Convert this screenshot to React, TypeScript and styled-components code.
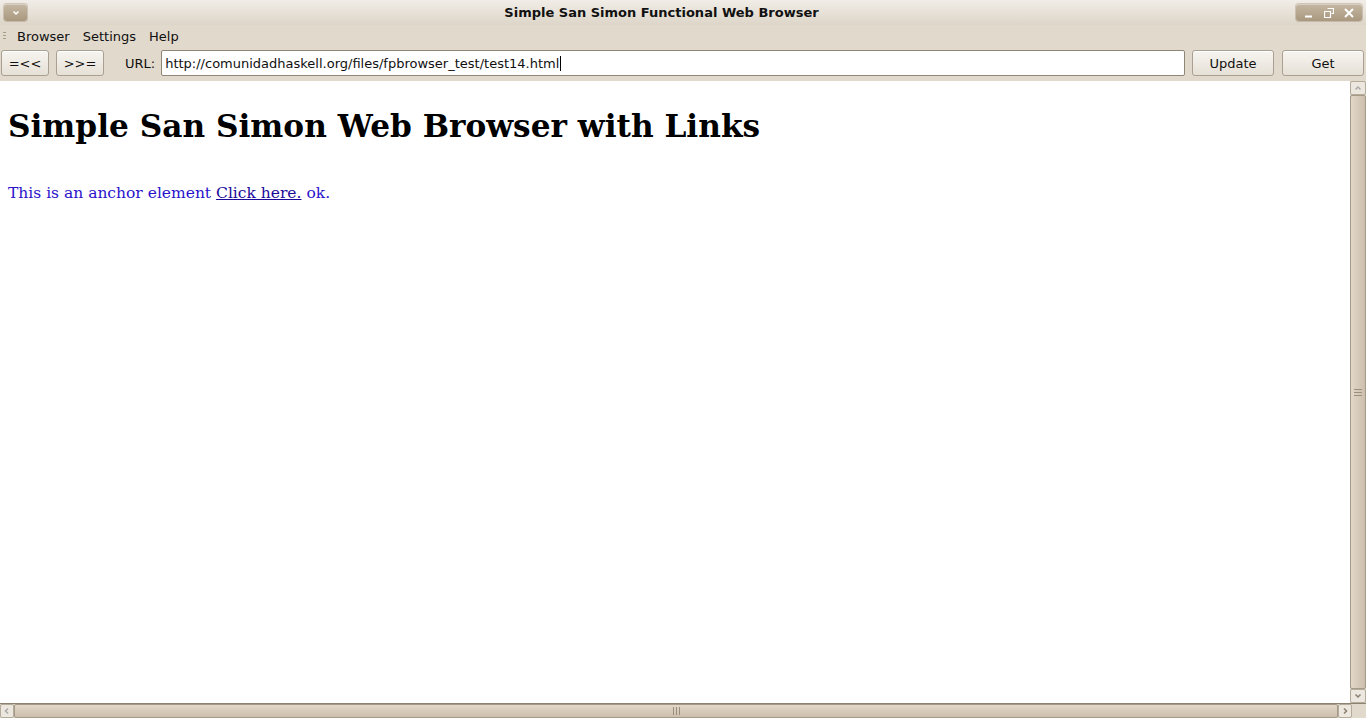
import React from "react";
import styled, { createGlobalStyle } from "styled-components";

const Global = createGlobalStyle`
  html, body { margin: 0; padding: 0; width: 1366px; height: 718px; overflow: hidden; }
  #root { width: 1366px; height: 718px; }
`;

const Window = styled.div`
  width: 1366px;
  height: 718px;
  display: flex;
  flex-direction: column;
  background: #e0d9cc;
  font-family: "DejaVu Sans", sans-serif;
  color: #101010;
`;

const TitleBar = styled.div`
  height: 25px;
  flex: none;
  display: flex;
  align-items: center;
  justify-content: space-between;
  padding: 0 4px;
  background: linear-gradient(#f1ede7, #ddd5c8);
`;

const TitleBtn = styled.div`
  height: 17px;
  display: flex;
  align-items: center;
  justify-content: center;
  gap: 10px;
  padding: 0 8px;
  border-radius: 3px;
  background: linear-gradient(#c5b7a2, #a9987f);
  box-shadow: inset 0 1px 0 rgba(255,255,255,0.35), 0 0 0 1px rgba(150,130,105,0.35);
`;

const Title = styled.div`
  font-weight: bold;
  font-size: 13px;
  color: #111;
  margin-left: 0;
`;

const MenuBar = styled.div`
  height: 22px;
  flex: none;
  display: flex;
  align-items: center;
  font-size: 13px;
`;

const Grip = styled.div`
  width: 3px;
  height: 9px;
  margin: 0 11px 0 3px;
  background: repeating-linear-gradient(#a89c8a 0 1px, transparent 1px 3px);
`;

const MenuItem = styled.span`
  margin-right: 13px;
`;

const Toolbar = styled.div`
  height: 32px;
  flex: none;
  display: flex;
  align-items: center;
  padding: 0 2px 0 1px;
`;

const Button = styled.div<{ $w: number; $ml?: number }>`
  width: ${(p) => p.$w}px;
  height: 26px;
  margin-left: ${(p) => p.$ml ?? 0}px;
  box-sizing: border-box;
  display: flex;
  align-items: center;
  justify-content: center;
  font-size: 13px;
  border: 1px solid #a9a092;
  border-radius: 3px;
  background: linear-gradient(#f7f5f1, #e6e0d6);
  box-shadow: inset 0 1px 0 #fff;
`;

const Label = styled.span`
  font-size: 13px;
  margin: 0 7px 0 21px;
`;

const Entry = styled.div`
  flex: 1;
  height: 26px;
  box-sizing: border-box;
  display: flex;
  align-items: center;
  padding-left: 3px;
  font-size: 13px;
  background: #fff;
  border: 1px solid #8f8676;
  border-radius: 2px;
  margin: 0 7px 0 -1px;
`;

const Caret = styled.span`
  display: inline-block;
  width: 1px;
  height: 15px;
  background: #000;
  margin-left: 1px;
`;

const Body = styled.div`
  flex: 1;
  display: flex;
  margin-top: 2px;
  min-height: 0;
`;

const Page = styled.div`
  flex: 1;
  background: #fff;
  padding: 0 8px;
  overflow: hidden;
`;

const Heading = styled.h1`
  font-family: "DejaVu Serif", serif;
  font-weight: bold;
  font-size: 31.2px;
  margin: 25px 0 0;
  line-height: 40px;
  color: #000;
`;

const Para = styled.p`
  font-family: "DejaVu Serif", serif;
  font-size: 15.5px;
  color: #2a12cc;
  margin: 37px 0 0;
  line-height: 20px;
`;

const Link = styled.a`
  color: #1a0a9a;
  text-decoration: underline;
`;

const VScroll = styled.div`
  width: 16px;
  display: flex;
  flex-direction: column;
  background: #ddd5c8;
`;

const Thumb = styled.div<{ $horizontal?: boolean }>`
  flex: 1;
  display: flex;
  align-items: center;
  justify-content: center;
  box-sizing: border-box;
  border: 1px solid #a59a88;
  border-radius: 2px;
  background: ${(p) =>
    p.$horizontal
      ? "linear-gradient(#e2d8c9, #cbbfac)"
      : "linear-gradient(90deg, #e2d8c9, #cbbfac)"};
`;

const Arrow = styled.div<{ $w: number; $h: number }>`
  width: ${(p) => p.$w}px;
  height: ${(p) => p.$h}px;
  flex: none;
  display: flex;
  align-items: center;
  justify-content: center;
  box-sizing: border-box;
  border: 1px solid #b5ab9b;
  border-radius: 2px;
  background: #ece7df;
`;

const HScroll = styled.div`
  height: 15px;
  flex: none;
  display: flex;
  background: #ddd5c8;
  border-top: 1px solid #8b8272;
  box-sizing: border-box;
`;

const Corner = styled.div`
  width: 14px;
  flex: none;
  background: #e0d9cc;
`;

const Chevron = ({ d, color = "#8a7f70" }: { d: string; color?: string }) => (
  <svg width="8" height="8" viewBox="0 0 8 8">
    <path d={d} fill="none" stroke={color} strokeWidth="1.5" />
  </svg>
);

const GripLines = ({ vertical }: { vertical?: boolean }) =>
  vertical ? (
    <svg width="8" height="7" viewBox="0 0 8 7">
      <path d="M0 0.5H8M0 3.5H8M0 6.5H8" stroke="#9a8e7c" strokeWidth="1" />
    </svg>
  ) : (
    <svg width="7" height="8" viewBox="0 0 7 8">
      <path d="M0.5 0V8M3.5 0V8M6.5 0V8" stroke="#9a8e7c" strokeWidth="1" />
    </svg>
  );

export default function App() {
  return (
    <>
      <Global />
      <Window>
        <TitleBar>
          <TitleBtn style={{ width: 23, padding: 0 }}>
            <Chevron d="M1.5 2.5L4 5L6.5 2.5" color="#fff" />
          </TitleBtn>
          <Title>Simple San Simon Functional Web Browser</Title>
          <TitleBtn>
            <svg width="10" height="10" viewBox="0 0 10 10">
              <path d="M1 8.5H8" stroke="#fff" strokeWidth="2" />
            </svg>
            <svg width="10" height="10" viewBox="0 0 10 10">
              <path d="M3.5 0.5H9.5V5.5H7.5M0.5 3.5H6.5V9.5H0.5Z" fill="none" stroke="#fff" strokeWidth="1.2" />
            </svg>
            <svg width="10" height="10" viewBox="0 0 10 10">
              <path d="M1 1L9 9M9 1L1 9" stroke="#fff" strokeWidth="2" />
            </svg>
          </TitleBtn>
        </TitleBar>
        <MenuBar>
          <Grip />
          <MenuItem>Browser</MenuItem>
          <MenuItem>Settings</MenuItem>
          <MenuItem>Help</MenuItem>
        </MenuBar>
        <Toolbar>
          <Button $w={48}>=&lt;&lt;</Button>
          <Button $w={48} $ml={7}>&gt;&gt;=</Button>
          <Label>URL:</Label>
          <Entry>
            http://comunidadhaskell.org/files/fpbrowser_test/test14.html
            <Caret />
          </Entry>
          <Button $w={82}>Update</Button>
          <Button $w={82} $ml={8}>Get</Button>
        </Toolbar>
        <Body>
          <Page>
            <Heading>Simple San Simon Web Browser with Links</Heading>
            <Para>
              This is an anchor element <Link>Click here.</Link> ok.
            </Para>
          </Page>
          <VScroll>
            <Arrow $w={16} $h={14}>
              <Chevron d="M1.5 5.5L4 3L6.5 5.5" color="#aaa" />
            </Arrow>
            <Thumb>
              <GripLines vertical />
            </Thumb>
            <Arrow $w={16} $h={14}>
              <Chevron d="M1.5 2.5L4 5L6.5 2.5" />
            </Arrow>
          </VScroll>
        </Body>
        <HScroll>
          <Arrow $w={14} $h={14}>
            <Chevron d="M5 1.5L2.5 4L5 6.5" color="#aaa" />
          </Arrow>
          <Thumb $horizontal>
            <GripLines />
          </Thumb>
          <Arrow $w={14} $h={14}>
            <Chevron d="M3 1.5L5.5 4L3 6.5" />
          </Arrow>
          <Corner />
        </HScroll>
      </Window>
    </>
  );
}
